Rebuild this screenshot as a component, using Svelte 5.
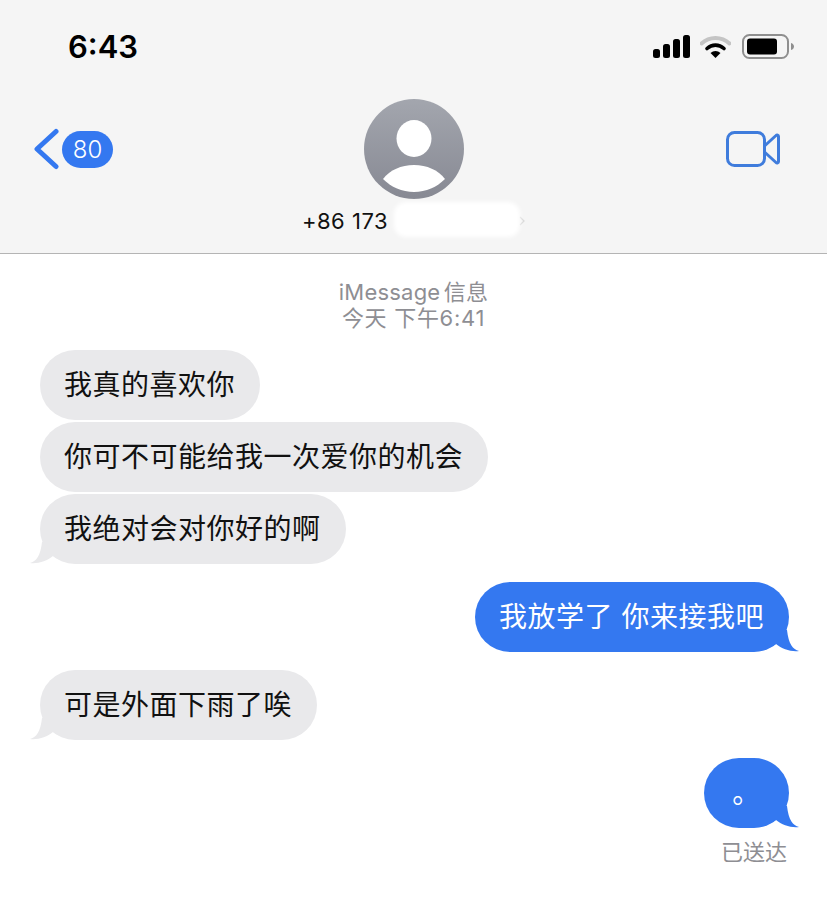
<script>
	const groups = [
		{ side: 'in', texts: ['我真的喜欢你', '你可不可能给我一次爱你的机会', '我绝对会对你好的啊'] },
		{ side: 'out', texts: ['我放学了 你来接我吧'] },
		{ side: 'in', texts: ['可是外面下雨了唉'] },
		{ side: 'out', texts: ['。'] }
	];
</script>

<div class="phone">
	<header class="top">
		<div class="status">
			<span class="time">6:43</span>
			<div class="icons">
				<svg class="signal" width="37" height="23" viewBox="0 0 37 23">
					<rect x="0" y="14" width="7" height="9" rx="2.5" />
					<rect x="10" y="9" width="7" height="14" rx="2.5" />
					<rect x="20" y="4" width="7" height="19" rx="2.5" />
					<rect x="30" y="0" width="7" height="23" rx="2.5" />
				</svg>
				<svg class="wifi" width="31" height="23" viewBox="0 0 31 23">
					<path d="M1.5 8.5 C9.5 1 21.5 1 29.5 8.5" fill="none" stroke="#c4c4c4" stroke-width="4" stroke-linecap="round" />
					<path d="M7 13.5 C12 9 19 9 24 13.5" fill="none" stroke="#000" stroke-width="3.6" stroke-linecap="round" />
					<path d="M10.5 18 C13.5 15.2 17.5 15.2 20.5 18 L15.5 23 Z" fill="#000" />
				</svg>
				<svg class="battery" width="52" height="25" viewBox="0 0 52 25">
					<rect x="1" y="1" width="45" height="23" rx="6.5" fill="none" stroke="#8f8f8f" stroke-width="2" />
					<rect x="5" y="4.5" width="30" height="16" rx="3" fill="#000" />
					<path d="M49 9 C51 9.500 52 11 52 12.500 C52 14 51 15.500 49 16 Z" fill="#8f8f8f" />
				</svg>
			</div>
		</div>

		<div class="nav">
			<div class="back">
				<svg width="27" height="42" viewBox="0 0 27 42">
					<path d="M23 3.500 L4 21 L23 38.500" fill="none" stroke="#3478f0" stroke-width="5" stroke-linecap="round" stroke-linejoin="round" />
				</svg>
				<span class="badge">80</span>
			</div>
			<svg class="avatar" width="100" height="100" viewBox="0 0 100 100">
				<defs>
					<linearGradient id="avatarFill" x1="0" y1="0" x2="0" y2="1">
						<stop offset="0" stop-color="#a3a6ae" />
						<stop offset="1" stop-color="#878993" />
					</linearGradient>
				</defs>
				<circle cx="50" cy="50" r="50" fill="url(#avatarFill)" />
				<ellipse cx="50" cy="39.500" rx="17.500" ry="18.500" fill="#fff" />
				<path d="M19 80 C26 71 37 66 50 66 C63 66 74 71 81 80 C73 88 62 93 50 93 C38 93 27 88 19 80 Z" fill="#fff" />
			</svg>
			<svg class="video" width="54" height="36" viewBox="0 0 54 36">
				<rect x="1.500" y="1.500" width="37" height="33" rx="7" fill="none" stroke="#3f7cdc" stroke-width="3" />
				<path d="M38.500 15 L50 4.500 C51 3.500 52.500 4 52.500 5.500 L52.500 30.500 C52.500 32 51 32.500 50 31.500 L38.500 21" fill="none" stroke="#3f7cdc" stroke-width="3" stroke-linejoin="round" />
			</svg>
		</div>

		<div class="name">
			<span>+86 173</span>
			<span class="smear"></span>
			<svg width="6" height="10" viewBox="0 0 6 10">
				<path d="M1 1 L5 5 L1 9" fill="none" stroke="#d8d8d8" stroke-width="1.200" />
			</svg>
		</div>
	</header>

	<main class="thread">
		<div class="meta">
			<div class="service">iMessage 信息</div>
			<div class="when">今天 下午6:41</div>
		</div>

		{#each groups as group}
			<div class="group {group.side}">
				{#each group.texts as text, i}
					<div class="bubble" class:dot={text === '。'}>
						{text}
						{#if i === group.texts.length - 1}
							<svg class="tail" width="30" height="30" viewBox="0 0 30 30">
								<path d="M0 29 C6 27.500 10.500 22 12 8 L30 8 L30 26 L23 22 C17 27 8 30 0 29 Z" />
							</svg>
						{/if}
					</div>
				{/each}
			</div>
		{/each}

		<div class="delivered">已送达</div>
	</main>
</div>

<style>
	:global(body) {
		background: #fff;
	}

	.phone {
		width: 827px;
		height: 901px;
		overflow: hidden;
		font-family: Inter, "Noto Sans CJK SC", sans-serif;
	}

	.top {
		height: 253px;
		background: #f5f5f5;
		border-bottom: 1px solid #b4b4b4;
	}

	.status {
		height: 93px;
		padding: 0 33px 0 68px;
		display: flex;
		align-items: center;
		justify-content: space-between;
	}

	.time {
		font-size: 31px;
		font-weight: 600;
		color: #000;
	}

	.icons {
		display: flex;
		align-items: center;
		gap: 10px;
	}

	.wifi {
		margin-right: 1px;
	}

	.nav {
		margin-top: 6px;
		padding: 0 33px;
		display: grid;
		grid-template-columns: 1fr auto 1fr;
		align-items: center;
	}

	.back {
		display: flex;
		align-items: center;
		gap: 2px;
	}

	.badge {
		width: 51px;
		height: 37px;
		border-radius: 19px;
		background: #3478f0;
		color: #fff;
		font-size: 24px;
		font-weight: 300;
		line-height: 37px;
		text-align: center;
	}

	.video {
		justify-self: end;
		margin-right: 14px;
	}

	.name {
		margin-top: 3px;
		height: 38px;
		display: flex;
		align-items: center;
		justify-content: center;
		font-size: 22px;
		letter-spacing: 0.5px;
		color: #111;
	}

	.smear {
		width: 126px;
		height: 35px;
		margin: -4px -1px 0 6px;
		border-radius: 12px;
		background: #fff;
		filter: blur(2px);
	}

	.thread {
		padding-top: 25px;
	}

	.meta {
		margin-bottom: 19px;
		text-align: center;
		font-size: 22px;
		line-height: 26px;
		color: #8e8e93;
	}

	.service {
		letter-spacing: 0.2px;
		word-spacing: -3px;
	}

	.when {
		letter-spacing: 0.7px;
	}

	.group {
		display: flex;
		flex-direction: column;
		gap: 2px;
		margin-bottom: 18px;
	}

	.group.in {
		align-items: flex-start;
		padding-left: 40px;
	}

	.group.out {
		align-items: flex-end;
		padding-right: 38px;
	}

	.bubble {
		position: relative;
		height: 70px;
		padding: 0 25px 0 24px;
		border-radius: 35px;
		font-size: 28px;
		letter-spacing: 0.5px;
		line-height: 70px;
		white-space: nowrap;
	}

	.in .bubble {
		background: #e9e9eb;
		color: #111;
	}

	.out .bubble {
		background: #3478f0;
		color: #fff;
	}

	.bubble.dot {
		width: 85px;
		padding: 0;
		text-align: center;
		box-sizing: border-box;
	}

	.tail {
		position: absolute;
		bottom: 0;
	}

	.in .tail {
		left: -10px;
		fill: #e9e9eb;
	}

	.out .tail {
		right: -10px;
		fill: #3478f0;
		transform: scaleX(-1);
	}

	.delivered {
		margin-top: -12px;
		padding-right: 40px;
		text-align: right;
		font-size: 22px;
		color: #8e8e93;
	}
</style>
